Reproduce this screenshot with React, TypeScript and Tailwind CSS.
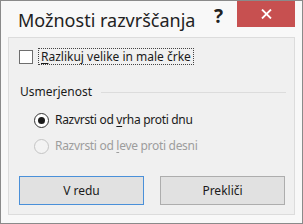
import React from 'react';

const font = { fontFamily: '"Noto Sans", "Open Sans", sans-serif' };

function Radio({ checked, disabled, children }: { checked?: boolean; disabled?: boolean; children: React.ReactNode }) {
  return (
    <div className="flex items-center h-[16px]">
      <div
        className={`w-[15px] h-[15px] rounded-full border flex items-center justify-center ${
          disabled ? 'border-[#c4c4c4] bg-[#f3f3f3]' : 'border-[#333] bg-white'
        }`}
      >
        {checked && <div className="w-[7px] h-[7px] rounded-full bg-[#1a1a1a]" />}
      </div>
      <span
        className={`ml-[6px] text-[12px] leading-none tracking-[-0.3px] ${
          disabled ? 'text-[#9d9d9d]' : 'text-[#1a1a1a]'
        }`}
      >
        {children}
      </span>
    </div>
  );
}

export default function App() {
  return (
    <div
      className="w-[303px] h-[224px] border border-[#8a8a8a] bg-[#f8f8f8] flex flex-col"
      style={font}
    >
      {/* Title bar */}
      <div className="h-[36px] flex items-start">
        <span className="ml-[17px] mt-[5px] text-[18px] text-[#222] leading-[28px]">
          Možnosti razvrščanja
        </span>
        <span className="ml-auto mt-[3px] text-[19px] font-bold text-[#222] leading-[24px]">?</span>
        <div className="ml-[14px] mr-[7px] w-[58px] h-[26px] bg-[#c75050] flex items-center justify-center">
          <svg width="11" height="10" viewBox="0 0 11 10">
            <path d="M1 0.5 L10 9.5 M10 0.5 L1 9.5" stroke="white" strokeWidth="1.8" />
          </svg>
        </div>
      </div>

      {/* Content panel */}
      <div className="mx-[7px] h-[178px] border border-[#dcdcdc] bg-[#f0f0f0] flex flex-col">
        <div className="flex items-center mt-[10px] ml-[10px]">
          <div className="w-[14px] h-[14px] border border-[#6e6e6e] bg-white" />
          <div className="ml-[5px] h-[17px] px-[2px] border border-dotted border-[#444] flex items-center">
            <span className="text-[12px] text-[#1a1a1a] leading-none">
              <span className="underline underline-offset-2">R</span>azlikuj velike in male črke
            </span>
          </div>
        </div>

        <div className="flex items-center mt-[21px] ml-[11px] mr-[8px]">
          <span className="text-[12px] text-[#1a1a1a] leading-none">Usmerjenost</span>
          <div className="flex-1 ml-[9px] h-px bg-[#dcdcdc]" />
        </div>

        <div className="ml-[25px] mt-[14px] flex flex-col gap-[10px]">
          <Radio checked>
            Razvrsti od <span className="underline underline-offset-2">v</span>rha proti dnu
          </Radio>
          <Radio disabled>
            Razvrsti od <span className="underline underline-offset-2">l</span>eve proti desni
          </Radio>
        </div>

        <div className="mt-[22px] ml-[10px] flex gap-[16px]">
          <button className="w-[125px] h-[29px] border border-[#4a90d9] bg-[#e1e1e1] text-[12px] text-[#1a1a1a]">
            V redu
          </button>
          <button className="w-[125px] h-[29px] border border-[#adadad] bg-[#e1e1e1] text-[12px] text-[#1a1a1a]">
            Prekliči
          </button>
        </div>
      </div>
    </div>
  );
}
